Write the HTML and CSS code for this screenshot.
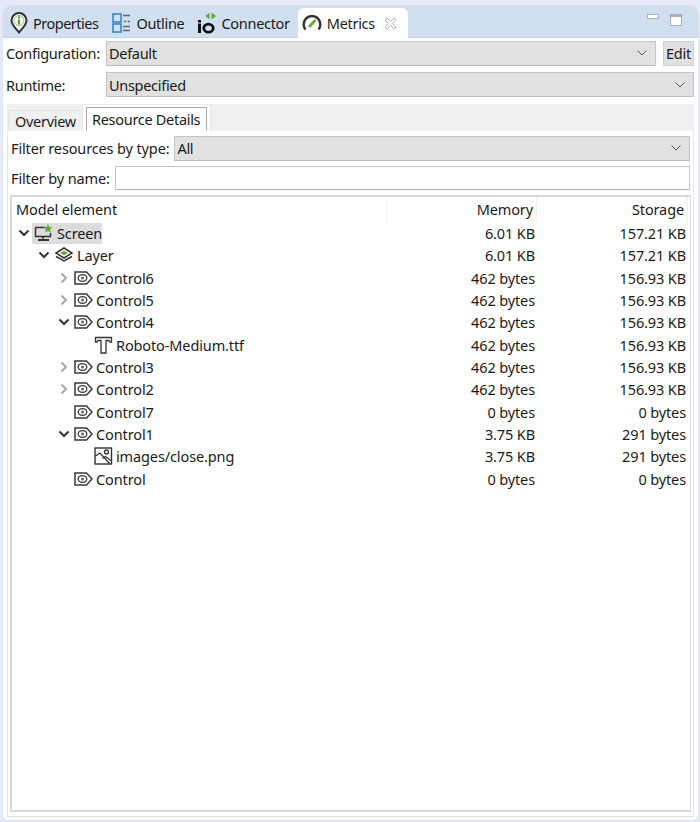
FILE: index.html
```html
<!DOCTYPE html>
<html lang="en">
<head>
  <meta charset="UTF-8" />
  <title>Metrics</title>
  <link rel="stylesheet" href="styles.css">
</head>
<body>
  <svg class="defs" width="0" height="0">
    <symbol id="i-control" viewBox="0 0 19 14">
      <path d="M1 1h11.500l5.500 6-5.500 6H1z" fill="#fff" stroke="#3a3a3a" stroke-width="1.500"/>
      <ellipse cx="8.500" cy="7" rx="4.300" ry="3.400" fill="none" stroke="#3a3a3a" stroke-width="1.300"/>
      <circle cx="8.500" cy="7" r="1.500" fill="#666"/>
    </symbol>
    <symbol id="i-open" viewBox="0 0 12 12">
      <path d="M1.500 3.500L6 8l4.500-4.500" fill="none" stroke="#333" stroke-width="2"/>
    </symbol>
    <symbol id="i-closed" viewBox="0 0 12 12">
      <path d="M3.500 1.500L8 6l-4.500 4.500" fill="none" stroke="#a8a8a8" stroke-width="2"/>
    </symbol>
    <symbol id="i-down" viewBox="0 0 12 8">
      <path d="M1.500 1.500L6 6l4.500-4.500" fill="none" stroke="#555" stroke-width="1"/>
    </symbol>
  </svg>

  <div class="view">
    <div class="view-tabs">
      <div class="view-tab">
        <svg class="tab-icon" width="18" height="22" viewBox="0 0 18 22">
          <path d="M9 20.500C6 16.500 1.500 13 1.500 8.500a7.500 7.500 0 0 1 15 0C16.500 13 12 16.500 9 20.500z" fill="#fff" stroke="#333" stroke-width="2"/>
          <circle cx="9" cy="8.500" r="5" fill="#fff" stroke="#8fbf70" stroke-width="1"/>
          <rect x="8" y="4.500" width="2" height="2" fill="#4f9a2f"/>
          <rect x="8" y="7.500" width="2" height="5" fill="#4f9a2f"/>
        </svg>
        <span>Properties</span>
      </div>
      <div class="view-tab">
        <svg class="tab-icon" width="19" height="20" viewBox="0 0 19 20">
          <rect x="1" y="1" width="8" height="8" fill="#cfe3f6" stroke="#2f7fc4" stroke-width="1.500"/>
          <rect x="1" y="11" width="8" height="8" fill="#cfe3f6" stroke="#2f7fc4" stroke-width="1.500"/>
          <path d="M11 2.500h7M12 8.500h2M15.500 8.500h2.500M11 13.500h7M11 17.500h7" stroke="#5a6a78" stroke-width="1.300"/>
        </svg>
        <span>Outline</span>
      </div>
      <div class="view-tab tab-connector">
        <svg class="tab-icon" width="21" height="22" viewBox="0 0 21 22">
          <path d="M12.500 0.500v7L8.500 4zM14.500 0.500v7L19 4z" fill="#5fa83c"/>
          <rect x="1" y="8" width="3" height="2.500" fill="#111"/>
          <rect x="1" y="11.500" width="3" height="9.500" fill="#111"/>
          <ellipse cx="11.500" cy="16.200" rx="4.700" ry="4" fill="none" stroke="#111" stroke-width="2.800"/>
        </svg>
        <span>Connector</span>
      </div>
      <div class="view-tab active">
        <svg class="tab-icon" width="20" height="16" viewBox="0 0 20 16">
          <path d="M3.500 14.500A8.300 8.300 0 1 1 16.500 14.500" fill="none" stroke="#333" stroke-width="2.400"/>
          <path d="M7 12L13.500 5" stroke="#5fa83c" stroke-width="2.600"/>
        </svg>
        <span>Metrics</span>
        <svg class="tab-close" width="13" height="13" viewBox="0 0 13 13">
          <path d="M1 3l2-2 3.500 3.500L10 1l2 2-3.500 3.500L12 10l-2 2-3.500-3.500L3 12l-2-2 3.500-3.500z" fill="#fff" stroke="#b4b8bc" stroke-width="1"/>
        </svg>
      </div>
      <div class="view-controls">
        <span class="ctl-min"></span>
        <span class="ctl-max"></span>
      </div>
    </div>

    <div class="form-row row-config">
      <label class="form-label label-wide">Configuration:</label>
      <div class="combo combo-config">
        <span>Default</span>
        <svg class="combo-arrow" width="12" height="8"><use href="#i-down"/></svg>
      </div>
      <button class="edit-btn">Edit</button>
    </div>
    <div class="form-row row-runtime">
      <label class="form-label label-wide">Runtime:</label>
      <div class="combo">
        <span>Unspecified</span>
        <svg class="combo-arrow" width="12" height="8"><use href="#i-down"/></svg>
      </div>
    </div>

    <div class="folder">
      <div class="folder-tabs">
        <div class="folder-tab">Overview</div>
        <div class="folder-tab current"><span class="focus-box">Resource Details</span></div>
      </div>
      <div class="folder-body">
        <div class="filter-row">
          <label class="form-label">Filter resources by type:</label>
          <div class="combo">
            <span>All</span>
            <svg class="combo-arrow" width="12" height="8"><use href="#i-down"/></svg>
          </div>
        </div>
        <div class="filter-row name-filter">
          <label class="form-label">Filter by name:</label>
          <div class="text-input"></div>
        </div>

        <div class="tree">
          <div class="tree-head">
            <div class="col-name">Model element</div>
            <div class="col-num">Memory</div>
            <div class="col-num">Storage</div>
          </div>

          <div class="tree-row">
            <div class="col-name depth-0">
              <svg class="twisty" width="12" height="12"><use href="#i-open"/></svg>
              <span class="selected">
                <svg class="node-icon" width="20" height="18" viewBox="0 0 20 18">
                  <path d="M1.500 3.500h9M1.500 3.500v9h15V9" fill="none" stroke="#333" stroke-width="1.500"/>
                  <path d="M9 12.500v2M4 16h11" stroke="#333" stroke-width="2"/>
                  <path d="M14 0l1.300 3 3.200.3-2.400 2.100.7 3.100-2.800-1.600-2.800 1.600.7-3.100-2.400-2.100 3.200-.3z" fill="#5fa83c"/>
                </svg>
                <span>Screen</span>
              </span>
            </div>
            <div class="col-num">6.01 KB</div>
            <div class="col-num">157.21 KB</div>
          </div>

          <div class="tree-row">
            <div class="col-name depth-1">
              <svg class="twisty" width="12" height="12"><use href="#i-open"/></svg>
              <svg class="node-icon" width="20" height="16" viewBox="0 0 20 16">
                <path d="M2 9.500l8 4.500 8-4.500" fill="none" stroke="#333" stroke-width="1.500"/>
                <path d="M10 1l8 5-8 5-8-5z" fill="#fff" stroke="#333" stroke-width="1.500"/>
                <path d="M10 3.700l4 2.300-4 2.300-4-2.300z" fill="#5fa83c"/>
              </svg>
              <span>Layer</span>
            </div>
            <div class="col-num">6.01 KB</div>
            <div class="col-num">157.21 KB</div>
          </div>

          <div class="tree-row">
            <div class="col-name depth-2">
              <svg class="twisty" width="12" height="12"><use href="#i-closed"/></svg>
              <svg class="node-icon" width="19" height="14"><use href="#i-control"/></svg>
              <span>Control6</span>
            </div>
            <div class="col-num">462 bytes</div>
            <div class="col-num">156.93 KB</div>
          </div>

          <div class="tree-row">
            <div class="col-name depth-2">
              <svg class="twisty" width="12" height="12"><use href="#i-closed"/></svg>
              <svg class="node-icon" width="19" height="14"><use href="#i-control"/></svg>
              <span>Control5</span>
            </div>
            <div class="col-num">462 bytes</div>
            <div class="col-num">156.93 KB</div>
          </div>

          <div class="tree-row">
            <div class="col-name depth-2">
              <svg class="twisty" width="12" height="12"><use href="#i-open"/></svg>
              <svg class="node-icon" width="19" height="14"><use href="#i-control"/></svg>
              <span>Control4</span>
            </div>
            <div class="col-num">462 bytes</div>
            <div class="col-num">156.93 KB</div>
          </div>

          <div class="tree-row">
            <div class="col-name depth-3">
              <span class="no-twisty"></span>
              <svg class="node-icon" width="19" height="18" viewBox="0 0 19 18">
                <path d="M1.500 6V1.500h16V6H16l-1-1.500h-3V17H7V4.500H4L3 6z" fill="#fff" stroke="#333" stroke-width="1.300"/>
              </svg>
              <span>Roboto-Medium.ttf</span>
            </div>
            <div class="col-num">462 bytes</div>
            <div class="col-num">156.93 KB</div>
          </div>

          <div class="tree-row">
            <div class="col-name depth-2">
              <svg class="twisty" width="12" height="12"><use href="#i-closed"/></svg>
              <svg class="node-icon" width="19" height="14"><use href="#i-control"/></svg>
              <span>Control3</span>
            </div>
            <div class="col-num">462 bytes</div>
            <div class="col-num">156.93 KB</div>
          </div>

          <div class="tree-row">
            <div class="col-name depth-2">
              <svg class="twisty" width="12" height="12"><use href="#i-closed"/></svg>
              <svg class="node-icon" width="19" height="14"><use href="#i-control"/></svg>
              <span>Control2</span>
            </div>
            <div class="col-num">462 bytes</div>
            <div class="col-num">156.93 KB</div>
          </div>

          <div class="tree-row">
            <div class="col-name depth-2">
              <span class="no-twisty"></span>
              <svg class="node-icon" width="19" height="14"><use href="#i-control"/></svg>
              <span>Control7</span>
            </div>
            <div class="col-num">0 bytes</div>
            <div class="col-num">0 bytes</div>
          </div>

          <div class="tree-row">
            <div class="col-name depth-2">
              <svg class="twisty" width="12" height="12"><use href="#i-open"/></svg>
              <svg class="node-icon" width="19" height="14"><use href="#i-control"/></svg>
              <span>Control1</span>
            </div>
            <div class="col-num">3.75 KB</div>
            <div class="col-num">291 bytes</div>
          </div>

          <div class="tree-row">
            <div class="col-name depth-3">
              <span class="no-twisty"></span>
              <svg class="node-icon" width="19" height="18" viewBox="0 0 19 18">
                <rect x="1" y="1" width="16.500" height="16" fill="#fff" stroke="#333" stroke-width="1.400"/>
                <path d="M1.500 9l4.500-3 9.500 10.500" fill="none" stroke="#333" stroke-width="1.300"/>
                <path d="M8.500 11.500l3-2 5.500 4" fill="none" stroke="#333" stroke-width="1.300"/>
                <circle cx="12.500" cy="5" r="2" fill="none" stroke="#333" stroke-width="1.300"/>
              </svg>
              <span>images/close.png</span>
            </div>
            <div class="col-num">3.75 KB</div>
            <div class="col-num">291 bytes</div>
          </div>

          <div class="tree-row">
            <div class="col-name depth-2">
              <span class="no-twisty"></span>
              <svg class="node-icon" width="19" height="14"><use href="#i-control"/></svg>
              <span>Control</span>
            </div>
            <div class="col-num">0 bytes</div>
            <div class="col-num">0 bytes</div>
          </div>
        </div>
      </div>
    </div>
  </div>
</body>
</html>
```

FILE: styles.css
```css
* {
  box-sizing: border-box;
}

html, body {
  height: 100%;
}

body {
  margin: 0;
  background-color: #e6e9f8;
  color: #1a1a1a;
  font-family: 'Noto Sans', 'Open Sans', sans-serif;
  font-size: 14.5px;
  line-height: 20px;
  letter-spacing: -0.3px;
  overflow: hidden;
}

.defs {
  display: block;
  height: 0;
}

.view {
  height: 816px;
  margin: 5px 1px 0 2px;
  background-color: #fff;
  border: 1px solid #dfe3ee;
  border-radius: 8px 8px 6px 6px;
  overflow: hidden;
  display: flex;
  flex-direction: column;
}

/* view tabs */
.view-tabs {
  height: 32px;
  flex: none;
  background-color: #d1e0f0;
  border-bottom: 1px solid #c5d4e4;
  display: flex;
  align-items: stretch;
  padding-left: 6px;
}

.view-tab {
  display: flex;
  align-items: center;
  gap: 5px;
  padding: 3px 7px 0 0;
  margin-right: 6px;
}

.tab-icon {
  flex: none;
}

.view-tab:first-child {
  padding-left: 1px;
  margin-right: 7px;
  letter-spacing: -0.5px;
}

.tab-connector {
  gap: 3px;
  margin-right: 0;
}

.view-tab.active {
  background-color: #fff;
  margin: 2px 0 -1px 1px;
  padding: 0 0 0 4px;
  width: 110px;
  border-radius: 6px 6px 0 0;
  gap: 5px;
}

.tab-close {
  flex: none;
  margin-left: 4px;
}

.view-controls {
  margin-left: auto;
  display: flex;
  gap: 11px;
  padding: 8px 16px 0 0;
  align-items: flex-start;
}

.ctl-min {
  width: 12px;
  height: 5px;
  background-color: #fff;
  border: 1px solid #a9afb6;
}

.ctl-max {
  width: 12px;
  height: 12px;
  background-color: #fff;
  border: 1px solid #a9afb6;
  border-top-width: 3px;
}

/* configuration rows */
.form-row {
  display: flex;
  align-items: center;
  padding: 0 4px 0 3px;
  flex: none;
}

.row-config {
  margin-top: 2px;
  height: 26px;
}

.row-runtime {
  margin-top: 6px;
  height: 25px;
}

.form-label {
  flex: none;
  white-space: nowrap;
}

.label-wide {
  width: 100px;
}

.combo {
  flex: 1;
  height: 25px;
  display: flex;
  align-items: center;
  justify-content: space-between;
  padding: 0 7px 0 2px;
  background-color: #e1e1e1;
  border: 1px solid #c4c4c4;
  border-bottom-color: #bcbcbc;
}

.combo-arrow {
  flex: none;
}

.edit-btn {
  flex: none;
  width: 31px;
  height: 25px;
  margin-left: 7px;
  padding: 0;
  font: inherit;
  letter-spacing: inherit;
  color: inherit;
  background-color: #e1e1e1;
  border: 1px solid #cfcfcf;
}

/* folder */
.folder {
  flex: 1;
  margin: 7px 4px 0 4px;
  display: flex;
  flex-direction: column;
  min-height: 0;
}

.folder-tabs {
  height: 27px;
  flex: none;
  background-color: #f0f0f0;
  display: flex;
  align-items: flex-end;
  padding-left: 1px;
}

.folder-tab {
  height: 21px;
  width: 75px;
  padding-left: 6px;
  background-color: #f0f0f0;
  border: 1px solid #e4e4e4;
  border-bottom: none;
}

.folder-tab.current {
  height: 27px;
  width: 129px;
  margin-left: -1px;
  padding: 2px 3px 0;
  background-color: #fff;
  border: 1px solid #e8e8e8;
  border-bottom: none;
}

.focus-box {
  display: block;
  height: 24px;
  padding: 1px 0 0 5px;
  border: 1px solid #a8a8a8;
  border-bottom: none;
  border-radius: 1px;
  white-space: nowrap;
}

.folder-body {
  flex: 1;
  min-height: 0;
  display: flex;
  flex-direction: column;
  padding: 5px 3px 4px 3px;
  border-left: 1px solid #e8e8e8;
  border-right: 1px solid #e8e8e8;
  border-bottom: 1px solid #e0e0e0;
  margin-bottom: 3px;
}

.filter-row {
  display: flex;
  align-items: center;
  height: 24px;
  flex: none;
  gap: 5px;
}

.filter-row .form-label {
  letter-spacing: -0.13px;
}

.name-filter {
  margin-top: 6px;
}

.text-input {
  flex: 1;
  height: 24px;
  background-color: #fff;
  border: 1px solid #c4c4c4;
  border-bottom-color: #b4b4b4;
}

/* tree */
.tree {
  flex: 1;
  margin: 5px -1px 0 -1px;
  background-color: #fff;
  border: 2px solid #d9d9d9;
  border-width: 2px 1px 2px 2px;
  min-height: 0;
  letter-spacing: -0.12px;
}

.tree-head,
.tree-row {
  display: grid;
  grid-template-columns: 375px 150px 151px;
}

.tree-head {
  height: 25px;
  align-items: center;
}

.tree-head .col-name {
  padding-left: 4px;
  height: 100%;
  line-height: 25px;
  border-right: 1px solid #f0f0f0;
}

.tree-head .col-num {
  height: 100%;
  line-height: 25px;
  padding-right: 3px;
  border-right: 1px solid #f0f0f0;
}

.tree-row {
  height: 22.33px;
  align-items: center;
}

.col-name {
  display: flex;
  align-items: center;
  white-space: nowrap;
}

.col-num {
  text-align: right;
  padding-right: 2px;
  white-space: nowrap;
}

.depth-0 { padding-left: 6px; }
.depth-1 { padding-left: 26px; }
.depth-2 { padding-left: 46px; }
.depth-3 { padding-left: 66px; }

.twisty,
.no-twisty {
  flex: none;
  width: 12px;
  height: 12px;
  margin-right: 4px;
}

.node-icon {
  flex: none;
  margin-right: 3px;
}

.selected {
  display: flex;
  align-items: center;
  height: 21px;
  width: 70px;
  margin-left: -2px;
  padding-left: 2px;
  background-color: #dcdcdc;
}
```
